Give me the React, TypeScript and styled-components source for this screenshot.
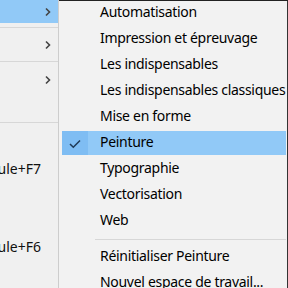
import React from "react";
import styled, { createGlobalStyle } from "styled-components";

const Global = createGlobalStyle`
  html, body { margin: 0; padding: 0; background: #f0f0f0; }
  body { font-family: "Noto Sans", "Open Sans", sans-serif; }
`;

const Screen = styled.div`
  width: 288px;
  height: 288px;
  display: flex;
  overflow: hidden;
  background: #f0f0f0;
`;

const MainMenu = styled.div`
  width: 58px;
  flex: none;
  display: flex;
  flex-direction: column;
  background: #f0f0f0;
  border-right: 1px solid #cdcdcd;
`;

const MainItem = styled.div<{ $h: number; $active?: boolean }>`
  height: ${(p) => p.$h}px;
  flex: none;
  display: flex;
  align-items: center;
  justify-content: flex-end;
  padding-right: 6px;
  background: ${(p) => (p.$active ? "#91c9f7" : "transparent")};
  color: #000;
  font-size: 14px;
  white-space: nowrap;
  overflow: hidden;
`;

const MainSep = styled.div<{ $gap: number }>`
  height: 1px;
  margin-top: ${(p) => p.$gap}px;
  background: #d7d7d7;
  flex: none;
`;

const Shortcut = styled.div<{ $h: number }>`
  height: ${(p) => p.$h}px;
  flex: none;
  display: flex;
  align-items: center;
  justify-content: flex-end;
  padding-right: 17px;
  font-size: 14px;
  color: #111;
  white-space: nowrap;
  overflow: hidden;
`;

const Chevron = () => (
  <svg width="8" height="10" viewBox="0 0 8 10">
    <path d="M2 1.5 L5.5 5 L2 8.5" fill="none" stroke="#444" strokeWidth="1.6" />
  </svg>
);

const SubMenu = styled.div`
  flex: 1;
  display: flex;
  flex-direction: column;
  background: #f2f2f2;
  box-shadow: inset 0 1px 0 #222, inset -1px 0 0 #333;
  padding: 0 2px 0 3px;
`;

const SubItem = styled.div<{ $active?: boolean }>`
  height: 24px;
  margin: 1px 0;
  flex: none;
  display: flex;
  align-items: center;
  box-sizing: border-box;
  padding-bottom: 3px;
  background: ${(p) => (p.$active ? "#91c9f7" : "transparent")};
  color: #000;
  font-size: 14px;
  letter-spacing: -0.3px;
  white-space: nowrap;
`;

const CheckCell = styled.div<{ $on?: boolean }>`
  width: 26px;
  align-self: stretch;
  margin-bottom: -3px;
  padding-top: 1px;
  flex: none;
  display: flex;
  align-items: center;
  justify-content: center;
  background: ${(p) => (p.$on ? "#7fbdf3" : "transparent")};
`;

const Label = styled.span`
  margin-left: 12px;
`;

const SubSep = styled.div`
  height: 1px;
  margin: 5px 0 4px 33px;
  background: #d7d7d7;
  flex: none;
`;

const Check = () => (
  <svg width="12" height="10" viewBox="0 0 12 10">
    <path d="M1 5 L4.3 8.3 L11 1.5" fill="none" stroke="#1f3a57" strokeWidth="1.5" />
  </svg>
);

const items = [
  "Automatisation",
  "Impression et épreuvage",
  "Les indispensables",
  "Les indispensables classiques",
  "Mise en forme",
  "Peinture",
  "Typographie",
  "Vectorisation",
  "Web",
];

export default function App() {
  return (
    <>
      <Global />
      <Screen>
        <MainMenu>
          <MainItem $h={23} $active>
            <Chevron />
          </MainItem>
          <MainSep $gap={4} />
          <MainItem $h={33}>
            <Chevron />
          </MainItem>
          <MainSep $gap={0} />
          <MainItem $h={36}>
            <Chevron />
          </MainItem>
          <MainSep $gap={24} />
          <Shortcut $h={90}>ule+F7</Shortcut>
          <Shortcut $h={66}>ule+F6</Shortcut>
        </MainMenu>
        <SubMenu>
          {items.map((t) => (
            <SubItem key={t} $active={t === "Peinture"}>
              <CheckCell $on={t === "Peinture"}>{t === "Peinture" && <Check />}</CheckCell>
              <Label>{t}</Label>
            </SubItem>
          ))}
          <SubSep />
          <SubItem>
            <CheckCell />
            <Label>Réinitialiser Peinture</Label>
          </SubItem>
          <SubItem>
            <CheckCell />
            <Label>Nouvel espace de travail...</Label>
          </SubItem>
        </SubMenu>
      </Screen>
    </>
  );
}
